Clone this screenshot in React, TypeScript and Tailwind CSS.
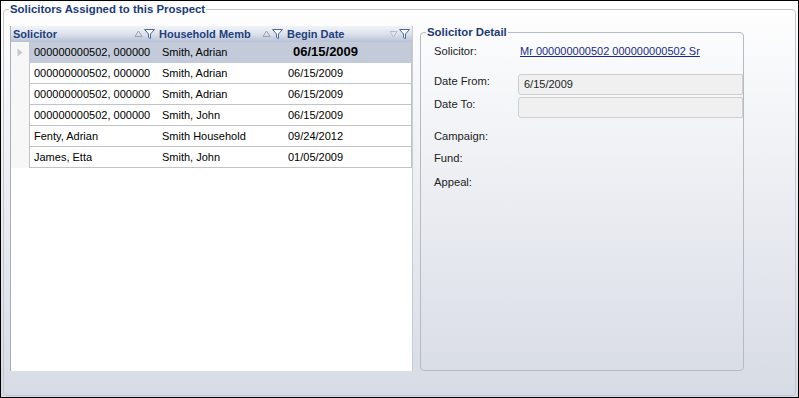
import React from "react";

const rows = [
  { s: "000000000502, 000000", h: "Smith, Adrian", d: "06/15/2009", sel: true },
  { s: "000000000502, 000000", h: "Smith, Adrian", d: "06/15/2009" },
  { s: "000000000502, 000000", h: "Smith, Adrian", d: "06/15/2009" },
  { s: "000000000502, 000000", h: "Smith, John", d: "06/15/2009" },
  { s: "Fenty, Adrian", h: "Smith Household", d: "09/24/2012" },
  { s: "James, Etta", h: "Smith, John", d: "01/05/2009" },
];

function SortIcon({ down }: { down?: boolean }) {
  return (
    <svg width="9" height="8" viewBox="0 0 9 8" className="shrink-0">
      {down ? (
        <path d="M1 1.5 H8 L4.5 7 Z" fill="#e4e6ea" stroke="#b8bcc4" strokeWidth="1" />
      ) : (
        <path d="M4.5 1 L8 6.5 H1 Z" fill="none" stroke="#9aa2ae" strokeWidth="1" />
      )}
    </svg>
  );
}

function FilterIcon() {
  return (
    <svg width="11" height="10" viewBox="0 0 11 10" className="shrink-0">
      <path d="M0.5 0.5 H10.5 L6.5 5 V9.5 L4.5 8.5 V5 Z" fill="#ffffff" stroke="#4a6aa8" strokeWidth="1" strokeLinejoin="round" />
    </svg>
  );
}

export default function App() {
  const grid = { fontFamily: '"Liberation Sans", Arial, sans-serif' };
  return (
    <div
      className="w-[799px] h-[398px] border border-black bg-gradient-to-b from-white to-[#d7dbe5] overflow-hidden"
      style={{ fontFamily: '"Liberation Sans", Arial, sans-serif' }}
    >
      <fieldset className="ml-[2px] mt-[1px] w-[793px] h-[394px] border border-[#c3c6cc] rounded-[4px] px-[6px] pb-[4px]">
        <legend className="-ml-[1px] px-[1px] text-[11.4px] leading-[14px] font-bold text-[#1c3a78]">
          Solicitors Assigned to this Prospect
        </legend>
        <div className="flex mt-[10px] gap-[7px]">
          {/* Grid */}
          <div className="w-[403px] h-[345px] bg-white border-l border-[#a9adb5] border-r border-r-[#c8ccd2] text-[11px] text-black" style={grid}>
            <div className="flex h-[16px] items-center bg-gradient-to-b from-[#f2f4f8] via-[#dde2ec] to-[#b7c1d5] font-bold text-[#1f3f7d]">
              <div className="w-[146px] flex items-center pl-[2px]">
                <span className="flex-1">Solicitor</span>
                <div className="flex items-center gap-[1px] pr-[2px]">
                  <SortIcon />
                  <FilterIcon />
                </div>
              </div>
              <div className="w-[128px] flex items-center pl-[2px]">
                <span className="flex-1 whitespace-nowrap overflow-hidden">Household Memb</span>
                <div className="flex items-center gap-[1px] pr-[2px]">
                  <SortIcon />
                  <FilterIcon />
                </div>
              </div>
              <div className="flex-1 flex items-center pl-[2px]">
                <span className="flex-1">Begin Date</span>
                <div className="flex items-center gap-[1px] pr-[2px]">
                  <SortIcon down />
                  <FilterIcon />
                </div>
              </div>
            </div>
            {rows.map((r, i) => (
              <div key={i} className="flex h-[21px]">
                <div className="w-[18px] flex items-center justify-center bg-[#f7f7f8]">
                  {r.sel && (
                    <svg width="6" height="9" viewBox="0 0 6 9">
                      <path d="M0.5 0.5 L5.5 4.5 L0.5 8.5 Z" fill="#c4c8ce" />
                    </svg>
                  )}
                </div>
                <div
                  className={`flex-1 flex items-center border-l border-r border-[#c2c4c8] ${
                    r.sel ? "bg-[#c3cbdb] border-b border-b-[#c3cbdb]" : "border-b"
                  } w-[382px]`}
                >
                  <div className="w-[128px] pl-[4px] whitespace-nowrap">{r.s}</div>
                  <div className="w-[127px] pl-[4px] whitespace-nowrap">{r.h}</div>
                  <div className={`flex-1 whitespace-nowrap ${r.sel ? "pl-[8px] font-bold text-[13px]" : "pl-[3px]"}`}>
                    {r.d}
                  </div>
                </div>
              </div>
            ))}
          </div>

          {/* Detail */}
          <fieldset className="-mt-[1px] w-[324px] h-[346px] border border-[#b6bac2] rounded-[4px] overflow-hidden">
            <legend className="ml-[5px] px-[1px] text-[11.4px] leading-[14px] font-bold text-[#1c3a78]">
              Solicitor Detail
            </legend>
            <div className="text-[11.2px] text-[#222] pl-[13px] pt-[2px]">
              <div className="flex h-[20px] items-center">
                <span className="w-[86px]">Solicitor:</span>
                <span className="text-[11px] text-[#1a2a8c] underline">Mr 000000000502 000000000502 Sr</span>
              </div>
              <div className="flex mt-[13px] h-[21px]">
                <span className="w-[84px] -mt-[1px]">Date From:</span>
                <div className="flex-1 bg-[#f0f0f0] border border-[#cfcfcf] rounded-l-[3px] pl-[5px] flex items-center text-[11px]">
                  6/15/2009
                </div>
              </div>
              <div className="flex mt-[2px] h-[21px]">
                <span className="w-[84px] -mt-[1px]">Date To:</span>
                <div className="flex-1 bg-[#f0f0f0] border border-[#cfcfcf] rounded-l-[3px]" />
              </div>
              <div className="mt-[7px] h-[22px] flex items-center">Campaign:</div>
              <div className="h-[22px] flex items-center">Fund:</div>
              <div className="h-[26px] flex items-center">Appeal:</div>
            </div>
          </fieldset>
        </div>
      </fieldset>
    </div>
  );
}
